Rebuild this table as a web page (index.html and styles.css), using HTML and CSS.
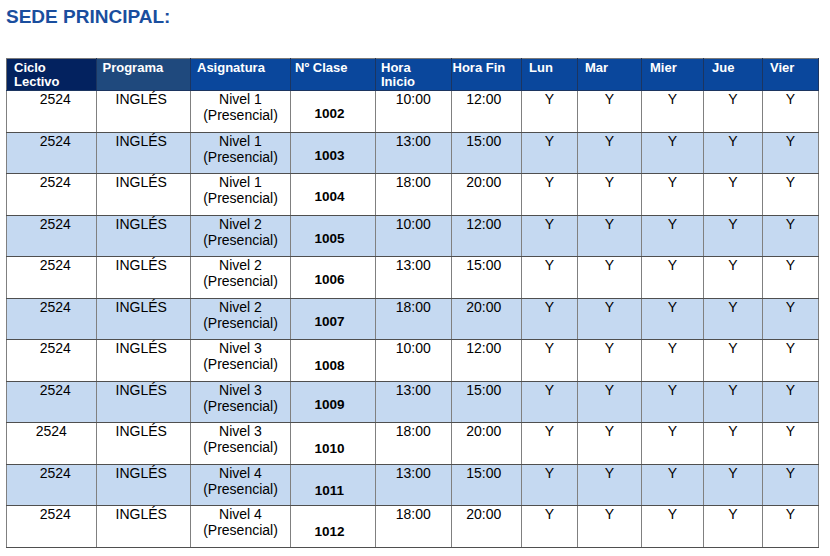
FILE: index.html
```html
<!DOCTYPE html>
<html lang="es">
<head>
<meta charset="utf-8">
<title>Sede Principal</title>
<link rel="stylesheet" href="styles.css">
</head>
<body>
<div class="page">
  <h1 class="title">SEDE PRINCIPAL:</h1>
  <table class="sched">
    <colgroup>
      <col class="c-ciclo"><col class="c-prog"><col class="c-asig"><col class="c-clase">
      <col class="c-hi"><col class="c-hf"><col class="c-lun"><col class="c-mar">
      <col class="c-mie"><col class="c-jue"><col class="c-vie">
    </colgroup>
    <thead>
      <tr>
        <th class="h-ciclo">Ciclo<br>Lectivo</th>
        <th class="h-prog">Programa</th>
        <th class="h-asig">Asignatura</th>
        <th class="h-clase">Nº Clase</th>
        <th class="h-hi">Hora<br>Inicio</th>
        <th class="h-hf">Hora Fin</th>
        <th class="h-lun">Lun</th>
        <th class="h-mar">Mar</th>
        <th class="h-mie">Mier</th>
        <th class="h-jue">Jue</th>
        <th class="h-vie">Vier</th>
      </tr>
    </thead>
    <tbody>
      <tr><td class="ciclo">2524</td><td class="prog">INGLÉS</td><td class="asig">Nivel 1<br>(Presencial)</td><td class="clase">1002</td><td class="hi">10:00</td><td class="hf">12:00</td><td class="d">Y</td><td class="d">Y</td><td class="d">Y</td><td class="d">Y</td><td class="d">Y</td></tr>
      <tr class="alt"><td class="ciclo">2524</td><td class="prog">INGLÉS</td><td class="asig">Nivel 1<br>(Presencial)</td><td class="clase">1003</td><td class="hi">13:00</td><td class="hf">15:00</td><td class="d">Y</td><td class="d">Y</td><td class="d">Y</td><td class="d">Y</td><td class="d">Y</td></tr>
      <tr><td class="ciclo">2524</td><td class="prog">INGLÉS</td><td class="asig">Nivel 1<br>(Presencial)</td><td class="clase">1004</td><td class="hi">18:00</td><td class="hf">20:00</td><td class="d">Y</td><td class="d">Y</td><td class="d">Y</td><td class="d">Y</td><td class="d">Y</td></tr>
      <tr class="alt"><td class="ciclo">2524</td><td class="prog">INGLÉS</td><td class="asig">Nivel 2<br>(Presencial)</td><td class="clase">1005</td><td class="hi">10:00</td><td class="hf">12:00</td><td class="d">Y</td><td class="d">Y</td><td class="d">Y</td><td class="d">Y</td><td class="d">Y</td></tr>
      <tr><td class="ciclo">2524</td><td class="prog">INGLÉS</td><td class="asig">Nivel 2<br>(Presencial)</td><td class="clase">1006</td><td class="hi">13:00</td><td class="hf">15:00</td><td class="d">Y</td><td class="d">Y</td><td class="d">Y</td><td class="d">Y</td><td class="d">Y</td></tr>
      <tr class="alt"><td class="ciclo">2524</td><td class="prog">INGLÉS</td><td class="asig">Nivel 2<br>(Presencial)</td><td class="clase">1007</td><td class="hi">18:00</td><td class="hf">20:00</td><td class="d">Y</td><td class="d">Y</td><td class="d">Y</td><td class="d">Y</td><td class="d">Y</td></tr>
      <tr><td class="ciclo">2524</td><td class="prog">INGLÉS</td><td class="asig">Nivel 3<br>(Presencial)</td><td class="clase low">1008</td><td class="hi">10:00</td><td class="hf">12:00</td><td class="d">Y</td><td class="d">Y</td><td class="d">Y</td><td class="d">Y</td><td class="d">Y</td></tr>
      <tr class="alt"><td class="ciclo">2524</td><td class="prog">INGLÉS</td><td class="asig">Nivel 3<br>(Presencial)</td><td class="clase">1009</td><td class="hi">13:00</td><td class="hf">15:00</td><td class="d">Y</td><td class="d">Y</td><td class="d">Y</td><td class="d">Y</td><td class="d">Y</td></tr>
      <tr><td class="ciclo shift">2524</td><td class="prog">INGLÉS</td><td class="asig">Nivel 3<br>(Presencial)</td><td class="clase low">1010</td><td class="hi">18:00</td><td class="hf">20:00</td><td class="d">Y</td><td class="d">Y</td><td class="d">Y</td><td class="d">Y</td><td class="d">Y</td></tr>
      <tr class="alt"><td class="ciclo">2524</td><td class="prog">INGLÉS</td><td class="asig">Nivel 4<br>(Presencial)</td><td class="clase low">1011</td><td class="hi">13:00</td><td class="hf">15:00</td><td class="d">Y</td><td class="d">Y</td><td class="d">Y</td><td class="d">Y</td><td class="d">Y</td></tr>
      <tr><td class="ciclo">2524</td><td class="prog">INGLÉS</td><td class="asig">Nivel 4<br>(Presencial)</td><td class="clase low">1012</td><td class="hi">18:00</td><td class="hf">20:00</td><td class="d">Y</td><td class="d">Y</td><td class="d">Y</td><td class="d">Y</td><td class="d">Y</td></tr>
    </tbody>
  </table>
</div>
</body>
</html>
```

FILE: styles.css
```css
html, body {
  margin: 0;
  padding: 0;
  background: #ffffff;
}

.page {
  padding: 6px 0 0 6px;
  font-family: "Liberation Sans", Arial, sans-serif;
  color: #000;
}

.title {
  margin: 0 0 30px 0;
  font-size: 19px;
  line-height: 22px;
  font-weight: bold;
  color: #1a4e9e;
}

.sched {
  border-collapse: collapse;
  table-layout: fixed;
  width: 812px;
}

.c-ciclo { width: 89.5px; }
.c-prog  { width: 94.5px; }
.c-asig  { width: 100px; }
.c-clase { width: 85px; }
.c-hi    { width: 75.5px; }
.c-hf    { width: 70.5px; }
.c-lun   { width: 56px; }
.c-mar   { width: 64px; }
.c-mie   { width: 62px; }
.c-jue   { width: 59px; }
.c-vie   { width: 56px; }

.sched thead tr {
  height: 32px;
}

.sched th {
  background: #0a479c;
  color: #ffffff;
  font-size: 13px;
  line-height: 14px;
  font-weight: bold;
  text-align: left;
  vertical-align: top;
  padding: 2px 2px 0 7px;
  border: 1px solid #1c3560;
  border-top-color: #7a7a7a;
}

.sched th.h-ciclo {
  background: #03225f;
  border-left-color: #6e6e6e;
}

.sched th.h-prog {
  background: #1f497d;
  padding-left: 6px;
}

.sched th.h-asig { padding-left: 6px; }
.sched th.h-clase { padding-left: 4px; }
.sched th.h-hi { padding-left: 5px; }
.sched th.h-hf { padding-left: 1px; }
.sched th.h-mie { padding-left: 8px; }
.sched th.h-jue { padding-left: 8px; }

.sched tbody tr {
  height: 41.5px;
}

.sched tbody tr.alt td {
  background: #c5d9f1;
}

.sched td {
  font-size: 14px;
  line-height: 16px;
  text-align: center;
  vertical-align: top;
  padding: 0;
  border-left: 1px solid #808080;
  border-right: 1px solid #808080;
  border-top: 1px solid #4f4f4f;
  border-bottom: 1px solid #4f4f4f;
  background: #ffffff;
}

.sched td.ciclo {
  padding-left: 8px;
}

.sched td.ciclo.shift {
  padding-left: 0;
}

.sched td.prog {
  padding-right: 4px;
}

.sched td.clase {
  font-weight: bold;
  font-size: 13.5px;
  padding-top: 15px;
  padding-right: 7px;
}

.sched td.clase.low {
  padding-top: 18px;
}

.sched td.hf {
  padding-right: 5px;
}
```
